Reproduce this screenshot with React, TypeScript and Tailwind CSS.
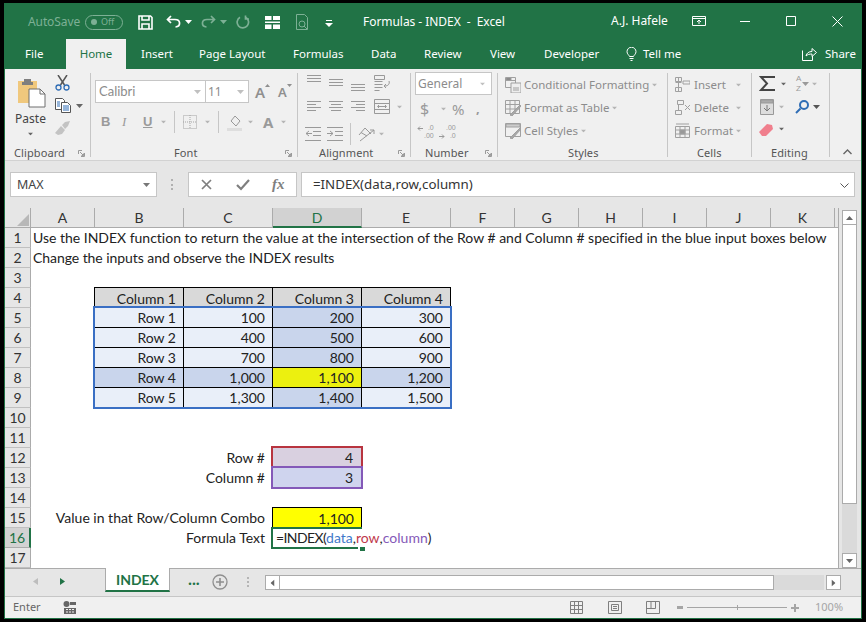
import React from "react";

const ui = { fontFamily: '"Noto Sans", sans-serif' };
const cal = { fontFamily: 'Lato, "Liberation Sans", sans-serif' };
const ar = { fontFamily: '"Liberation Sans", sans-serif' };

const Caret = ({ className = "" }: { className?: string }) => (
  <svg width="7" height="4" viewBox="0 0 7 4" className={className}><path d="M0 0h7L3.5 4z" fill="currentColor" /></svg>
);

const Launcher = () => (
  <svg width="7" height="7" viewBox="0 0 7 7" fill="none" stroke="#9a9a9a"><path d="M.5 4V.5H4M6.5 3v3.5H3M2 2l3.5 3.5M3.5 5.5h2v-2" /></svg>
);

function Sep({ h = "h-[22px]" }: { h?: string }) {
  return <div className={`w-px bg-[#c6c6c6] ${h}`} />;
}

function Group({ w, label, launcher, labelPad, children }: { w: string; label: string; launcher?: boolean; labelPad: string; children: React.ReactNode }) {
  return (
    <div className={`${w} relative flex flex-col border-r border-[#c6c6c6] mt-[4px] mb-[3px]`}>
      <div className="h-[74px] shrink-0">{children}</div>
      <div className={`flex items-center h-[12px] shrink-0 text-[11px] tracking-[0.1px] text-[#555] ${labelPad}`}>
        <span>{label}</span>
      </div>
      {launcher && <div className="absolute right-[5px] bottom-0 flex"><Launcher /></div>}
    </div>
  );
}

const colHeads = ["A", "B", "C", "D", "E", "F", "G", "H", "I", "J", "K"];

const rowStarts = ["row-start-2","row-start-3","row-start-4","row-start-5","row-start-6","row-start-7","row-start-8","row-start-9","row-start-10","row-start-11","row-start-12","row-start-13","row-start-14","row-start-15","row-start-16","row-start-17","row-start-18"];

const tableRows: { r: string; row: string; vals: string[]; hi?: boolean }[] = [
  { r: "Row 1", row: "row-start-6", vals: ["100", "200", "300"] },
  { r: "Row 2", row: "row-start-7", vals: ["400", "500", "600"] },
  { r: "Row 3", row: "row-start-8", vals: ["700", "800", "900"] },
  { r: "Row 4", row: "row-start-9", vals: ["1,000", "1,100", "1,200"], hi: true },
  { r: "Row 5", row: "row-start-10", vals: ["1,300", "1,400", "1,500"] },
];

const tCols = ["col-start-3", "col-start-4", "col-start-5", "col-start-6"];

function TCell({ cls, children }: { cls: string; children: React.ReactNode }) {
  return <div className={`${cls} flex items-center justify-end pr-[7px] text-[14px] text-[#222] border-b border-r border-black`}>{children}</div>;
}

function TitleBar() {
  return (
    <div className="h-[36px] flex items-center text-white text-[12px] pt-[2px]">
      <span className="ml-[23px] w-[57px] text-[12px] text-[#7db095] tracking-[-0.1px]">AutoSave</span>
      <div className="w-[38px] h-[15px] rounded-full border border-[#7db095] flex items-center pl-[5px] gap-[4px] text-[9px] text-[#7db095]">
        <span className="w-[6px] h-[6px] rounded-full bg-[#7db095]" /><span>Off</span>
      </div>
      <svg className="ml-[15px]" width="15" height="15" viewBox="0 0 15 15" fill="none" stroke="#fff" strokeWidth="1.6"><path d="M1 1h11.5L14 2.5V14H1z" /><path d="M4 1v4h7V1M4 14V9h7v5" /></svg>
      <svg className="ml-[13px]" width="15" height="14" viewBox="0 0 15 14" fill="none" stroke="#fff" strokeWidth="1.7"><path d="M5 1 1.5 4.5 5 8M2 4.5h7c6 0 6 7 .5 7.5" /></svg>
      <Caret className="ml-[4px] text-white" />
      <svg className="ml-[9px]" width="15" height="14" viewBox="0 0 15 14" fill="none" stroke="#7db095" strokeWidth="1.7"><path d="M10 1l3.5 3.5L10 8M13 4.5H6c-6 0-6 7-.5 7.5" /></svg>
      <Caret className="ml-[4px] text-[#7db095]" />
      <svg className="ml-[9px]" width="14" height="14" viewBox="0 0 14 14" fill="none" stroke="#7db095" strokeWidth="1.7"><path d="M9.5 2.2A5.7 5.7 0 1 1 4 2.3M9.5.5v3.5H13" /></svg>
      <svg className="ml-[15px]" width="15" height="13" viewBox="0 0 15 13" fill="#fff"><path d="M0 0h6.500v4H0zM8 0h7v4H8zM0 5.500h15v1.500H0zM0 8.500h6.500V13H0zM8 8.500h7V13H8z" /></svg>
      <svg className="ml-[15px]" width="15" height="16" viewBox="0 0 15 16" fill="none" stroke="#7db095"><path d="M1.500.500h8l3 3v12h-11z" /><circle cx="7" cy="10" r="3" /><path d="M9 12l3 3" /></svg>
      <svg className="ml-[15px] mt-[3px]" width="8" height="7" viewBox="0 0 8 7" fill="#fff"><path d="M1 0h6v1H1zM0 3h8L4 7z" /></svg>
      <span className="ml-[30px] w-[248px] tracking-[-0.05px] whitespace-nowrap">Formulas - INDEX&nbsp; -&nbsp; Excel</span>
      <span className="w-[56px] -mt-[2px] whitespace-nowrap">A.J. Hafele</span>
      <svg className="ml-[25px] -mt-[2px]" width="14" height="10" viewBox="0 0 14 10" fill="none" stroke="#fff"><path d="M.5.500h13v9H.5zM.5 2.500h13M7 8V4M5 6l2-2 2 2" /></svg>
      <svg className="ml-[34px] -mt-[2px]" width="10" height="1" viewBox="0 0 10 1"><path d="M0 0h10v1H0z" fill="#fff" /></svg>
      <svg className="ml-[36px] -mt-[2px]" width="10" height="10" viewBox="0 0 10 10" fill="none" stroke="#fff"><path d="M.5.500h9v9h-9z" /></svg>
      <svg className="ml-[36px] -mt-[2px]" width="11" height="11" viewBox="0 0 11 11" fill="none" stroke="#fff"><path d="M.5.500l10 10M10.500.500l-10 10" /></svg>
    </div>
  );
}

function Tabs() {
  const items: [string, string][] = [
    ["Insert", "ml-[15px] w-[58px]"],
    ["Page Layout", "w-[94px]"],
    ["Formulas", "w-[78px]"],
    ["Data", "w-[53px]"],
    ["Review", "w-[66px]"],
    ["View", "w-[54px]"],
    ["Developer", "w-[82px]"],
  ];
  return (
    <div className="h-[30px] flex items-stretch text-white text-[11.5px]">
      <span className="w-[61px] pl-[20px] flex items-center">File</span>
      <span className="w-[60px] bg-[#f0f0f0] text-[#217346] flex items-center justify-center">Home</span>
      {items.map(([t, c]) => <span key={t} className={`${c} flex items-center`}>{t}</span>)}
      <svg className="self-center" width="11" height="14" viewBox="0 0 10 14" fill="none" stroke="#fff"><path d="M3 9.500C2.500 8 .5 7 .5 4.700a4.500 4.500 0 0 1 9 0C9.500 7 7.500 8 7 9.500zM3 11.500h4M4 13.500h2" /></svg>
      <span className="ml-[6px] w-[159px] flex items-center">Tell me</span>
      <svg className="self-center" width="15" height="14" viewBox="0 0 15 14" fill="none" stroke="#fff"><path d="M.5 3.500v10h10V9M4 9c.5-3 3-4.500 6-4.500V1.500l4.500 4-4.500 4V7C7.500 7 5.500 7.500 4 9z" /></svg>
      <span className="ml-[8px] flex items-center">Share</span>
    </div>
  );
}

function StyleRow({ icon, label }: { icon: React.ReactNode; label: string }) {
  return (
    <div className="h-[23px] flex items-center text-[11.5px] text-[#8c8c8c]">
      <span className="w-[19px] flex">{icon}</span>
      <span>{label}</span>
      <Caret className="ml-[2px] text-[#b5b5b5] scale-75" />
    </div>
  );
}

const G = "#a0a0a0";

function Ribbon() {
  return (
    <div className="h-[92px] bg-[#f0f0f0] border-b border-[#d2d2d2] flex text-[#888]">
      <div className="w-[1px]" />
      <Group w="w-[85px]" label="Clipboard" launcher labelPad="pl-[8px]">
        <div className="flex pt-[2px]">
          <div className="w-[49px] flex flex-col items-center">
            <svg className="mt-[3px] ml-[2px]" width="30" height="30" viewBox="0 0 30 30">
              <path d="M1 3h19v22H1z" fill="#f0c87d" />
              <path d="M7 1h7v3h2v3H5V4h2z" fill="#7f7f7f" />
              <path d="M12 11h11l5 5v13H12z" fill="#fff" stroke="#6f6f6f" />
              <path d="M23 11v5h5" fill="none" stroke="#6f6f6f" />
            </svg>
            <span className="text-[12px] text-[#444] mt-[2px] leading-[18px]">Paste</span>
            <Caret className="mt-[4px] text-[#666] scale-75" />
          </div>
          <div className="flex flex-col gap-[7px]">
            <svg width="15" height="16" viewBox="0 0 15 16" fill="none"><path d="M3 0l6.500 10M12 0L5.500 10" stroke="#555" strokeWidth="1.500" /><circle cx="3.500" cy="12.500" r="2.500" stroke="#2f6db5" strokeWidth="1.300" /><circle cx="11.500" cy="12.500" r="2.500" stroke="#2f6db5" strokeWidth="1.300" /></svg>
            <div className="flex items-center">
              <svg width="16" height="15" viewBox="0 0 16 15" fill="#fff" stroke="#555"><path d="M.5.500h7l2 2v9h-9z" /><path d="M6.500 4.500h6l3 3v7h-9z" /><path d="M2 4h3M2 6h3M2 8h3" stroke="#2f6db5" /><path d="M8 8h6M8 10h6M8 12h6" stroke="#2f6db5" /></svg>
              <Caret className="ml-[5px] text-[#666]" />
            </div>
            <svg className="mt-[1px]" width="16" height="14" viewBox="0 0 16 14" fill="#c3c3c3"><path d="M0 12 6 5l4 4-3 4-4 1zM7 4l3-3 5-1-2 5-3 3z" /></svg>
          </div>
        </div>
      </Group>
      <Group w="w-[207px]" label="Font" labelPad="pl-[83px]" launcher>
        <div className="flex pt-[7px] pl-[4px] items-center">
          <div className="w-[111px] h-[23px] bg-white border border-[#c6c6c6] flex items-center pl-[3px] text-[#8c8c8c]" style={cal}>
            <span className="flex-1 text-[13px]">Calibri</span><Caret className="mr-[4px] text-[#c0c0c0]" />
          </div>
          <div className="w-[43px] h-[23px] bg-white border border-l-0 border-[#c6c6c6] flex items-center pl-[2px] text-[#8c8c8c]">
            <span className="flex-1 text-[12px]">11</span><Caret className="mr-[4px] text-[#c0c0c0]" />
          </div>
          <div className="ml-[6px] flex items-start text-[15px] font-semibold text-[#8f8f8f]"><span className="leading-[18px]">A</span><svg className="mt-[1px]" width="5" height="3" viewBox="0 0 5 3"><path d="M0 3 2.500 0 5 3z" fill="#8f8f8f" /></svg></div>
          <div className="ml-[8px] flex items-start text-[13px] font-semibold text-[#8f8f8f]"><span className="leading-[18px]">A</span><svg className="mt-[1px]" width="5" height="3" viewBox="0 0 5 3"><path d="M0 0 2.500 3 5 0z" fill="#8f8f8f" /></svg></div>
        </div>
        <div className="flex items-center h-[24px] mt-[7px] text-[#9a9a9a]">
          <span className="ml-[10px] w-[21px] text-[13px] font-bold" style={ar}>B</span>
          <span className="w-[21px] text-[13px] italic" style={{ fontFamily: '"Liberation Serif"' }}>I</span>
          <span className="w-[17px] text-[13px] font-bold underline" style={ar}>U</span>
          <Caret className="text-[#b5b5b5] scale-75" />
          <div className="ml-[7px] mr-[8px]"><Sep /></div>
          <svg width="14" height="14" viewBox="0 0 14 14" fill="none" stroke="#a5a5a5" strokeDasharray="1 1"><path d="M.5.500h13v13H.5zM7 0v14M0 7h14" /></svg>
          <Caret className="ml-[7px] text-[#b5b5b5] scale-75" />
          <div className="ml-[7px] mr-[7px]"><Sep /></div>
          <svg width="17" height="17" viewBox="0 0 17 17" fill="none"><path d="M5 7l4-5 5 5-4 5z" stroke="#999" /><path d="M1 14h15v3H1z" fill="#dedede" /></svg>
          <Caret className="ml-[4px] text-[#b5b5b5] scale-75" />
          <span className="ml-[9px] w-[15px] text-[15px] font-bold">A</span>
          <Caret className="ml-[2px] text-[#b5b5b5] scale-75" />
        </div>
      </Group>
      <Group w="w-[113px]" label="Alignment" launcher labelPad="pl-[21px]">
        <div className="flex pl-[8px] pt-[2px] gap-[6px]">
          <svg width="16" height="16" viewBox="0 0 16 16" stroke="#999"><path d="M1 .5h14M1 3.500h14M1 6.500h14" /></svg>
          <svg width="16" height="16" viewBox="0 0 16 16" stroke="#999"><path d="M1 4.500h14M1 7.500h14M1 10.500h14" /></svg>
          <svg width="16" height="16" viewBox="0 0 16 16" stroke="#999"><path d="M1 9.500h14M1 12.500h14M1 15.500h14" /></svg>
          <svg className="ml-[2px]" width="17" height="16" viewBox="0 0 17 16" fill="none" stroke="#999"><path d="M.5.500h10v4H.5zM.5 6.500h8M.5 9.500h8M.5 12.500h8M.5 15.500h5M15 6c1 3-1 5-4 5M12 9l-2 2 2 2" /></svg>
        </div>
        <div className="flex pl-[8px] pt-[8px] gap-[6px] items-center">
          <svg width="16" height="11" viewBox="0 0 16 11" stroke="#999"><path d="M1 .5h14M1 3.500h9M1 6.500h14M1 9.500h9" /></svg>
          <svg width="16" height="11" viewBox="0 0 16 11" stroke="#999"><path d="M1 .5h14M3 3.500h10M1 6.500h14M3 9.500h10" /></svg>
          <svg width="16" height="11" viewBox="0 0 16 11" stroke="#999"><path d="M1 .5h14M6 3.500h9M1 6.500h14M6 9.500h9" /></svg>
          <svg className="ml-[2px]" width="16" height="15" viewBox="0 0 16 15" fill="none" stroke="#999"><path d="M.5.500h15v14H.5zM.5 4.500h15M.5 10.500h15M4 7.500h8M5 6 3.500 7.500 5 9M11 6l1.500 1.500L11 9" /></svg>
          <Caret className="text-[#b5b5b5] scale-75" />
        </div>
        <div className="flex pl-[7px] pt-[9px] items-center">
          <svg width="16" height="14" viewBox="0 0 16 14" fill="none" stroke="#999"><path d="M0 .5h16M8 4.500h8M8 8.500h8M0 13.500h16M7 6.500H1M4 4 1 6.500 4 9" /></svg>
          <svg className="ml-[6px]" width="16" height="14" viewBox="0 0 16 14" fill="none" stroke="#999"><path d="M0 .5h16M8 4.500h8M8 8.500h8M0 13.500h16M0 6.500h6M3 4l3 2.500L3 9" /></svg>
          <div className="ml-[7px] mr-[7px]"><Sep /></div>
          <svg width="18" height="16" viewBox="0 0 18 16" fill="none" stroke="#999"><path d="M1 9l6-7 6 6M3 6.500l6 3.500M2 15 16 4M12 4h4v4" /></svg>
          <Caret className="ml-[2px] text-[#b5b5b5] scale-75" />
        </div>
      </Group>
      <Group w="w-[87px]" label="Number" launcher labelPad="pl-[14px]">
        <div className="pl-[4px] -mt-[1px]">
          <div className="w-[77px] h-[23px] bg-white border border-[#c6c6c6] flex items-center pl-[2px] text-[12px] text-[#8c8c8c]">
            <span className="flex-1">General</span><Caret className="mr-[5px] text-[#c0c0c0] scale-75" />
          </div>
          <div className="flex items-center h-[24px] mt-[2px] text-[#9a9a9a] text-[15px]">
            <span className="ml-[5px] w-[17px] text-[16px]">$</span>
            <Caret className="ml-[3px] text-[#b5b5b5] scale-75" />
            <span className="ml-[5px] w-[24px]">%</span>
            <span className="font-bold text-[13px]">,</span>
          </div>
          <div className="flex items-center h-[24px] -mt-[1px] text-[#999] text-[7px] leading-[8.5px]" style={ar}>
            <div className="ml-[2px] w-[22px] flex items-start">
              <svg className="mt-[2px] mr-[1px]" width="6" height="5" viewBox="0 0 6 5" fill="none" stroke="#999"><path d="M6 2.500H1M3 .5l-2 2 2 2" /></svg>
              <div className="text-right">.0<br />.00</div>
            </div>
            <div className="w-[20px] flex items-end">
              <svg className="mb-[2px] mr-[1px]" width="6" height="5" viewBox="0 0 6 5" fill="none" stroke="#999"><path d="M0 2.500h5M3 .5l2 2-2 2" /></svg>
              <div className="text-right">.00<br />.0</div>
            </div>
          </div>
        </div>
      </Group>
      <Group w="w-[170px]" label="Styles" labelPad="pl-[70px]">
        <div className="pl-[7px]">
          <StyleRow label="Conditional Formatting" icon={<svg width="16" height="16" viewBox="0 0 16 16" fill="none" stroke={G}><path d="M.5.500h10v10H.5z" /><path d="M6 6h10v10H6z" fill="#eee" /><path d="M.5 3.500h10M8 11h6M8 13h6" /><path d="M1 1h5v2H1z" fill="#777" /></svg>} />
          <StyleRow label="Format as Table" icon={<svg width="16" height="16" viewBox="0 0 16 16" fill="none" stroke={G}><path d="M.5.500h14v13H.5zM.5 4.500h14M.5 9h14M5 .5v13M10 .5v13" /><path d="M5 15 15 5l1 1L7 16z" fill="#a8a8a8" /></svg>} />
          <StyleRow label="Cell Styles" icon={<svg width="16" height="16" viewBox="0 0 16 16" fill="none" stroke={G}><path d="M.5.500h15v13H.5z" /><path d="M1 1h14v3H1z" fill="#ccc" /><path d="M5 15 15 5l1 1L7 16z" fill="#a8a8a8" /></svg>} />
        </div>
      </Group>
      <Group w="w-[84px]" label="Cells" labelPad="pl-[29px]">
        <div className="pl-[7px]">
          <div className="flex items-center h-[23px] text-[11.5px] text-[#8c8c8c]"><svg className="mr-[4px]" width="15" height="15" viewBox="0 0 15 15" fill="none" stroke={G}><path d="M.5.500h6v4h-6zM.5 10.500h6v4h-6zM.5 5.500h6M3.500 0v15M8 4h7v3H8z" /></svg><span className="w-[41px]">Insert</span><Caret className="text-[#b5b5b5] scale-75" /></div>
          <div className="flex items-center h-[23px] text-[11.5px] text-[#8c8c8c]"><svg className="mr-[4px]" width="15" height="15" viewBox="0 0 15 15" fill="none" stroke={G}><path d="M2.500.500h6v4h-6zM.5 10.500h6v4h-6zM3.500 5v5M10 5l5 5M15 5l-5 5" /></svg><span className="w-[41px]">Delete</span><Caret className="text-[#b5b5b5] scale-75" /></div>
          <div className="flex items-center h-[23px] text-[11.5px] text-[#8c8c8c]"><svg className="mr-[4px]" width="15" height="15" viewBox="0 0 15 15" fill="none" stroke={G}><path d="M.5 3.500h14v11H.5zM5 3.500v11M10 3.500v11M.5 7h14M.5 11h14M1 1h13" /><path d="M5 7h5v4H5z" fill="#999" /></svg><span className="w-[41px]">Format</span><Caret className="text-[#b5b5b5] scale-75" /></div>
        </div>
      </Group>
      <Group w="w-[78px]" label="Editing" labelPad="pl-[19px]">
        <div className="pl-[7px] pt-[1px]">
          <div className="flex items-center h-[19px]">
            <svg width="16" height="15" viewBox="0 0 16 15" fill="none" stroke="#444" strokeWidth="2"><path d="M15 2V1H2l6 6.500L2 14h13v-1" /></svg>
            <Caret className="ml-[5px] text-[#666] scale-75" />
            <span className="ml-[9px] text-[8px] leading-[9.5px] text-[#9a9a9a]" style={ar}>A<br />Z</span>
            <Caret className="ml-[1px] text-[#9a9a9a]" />
            <Caret className="ml-[2px] text-[#b5b5b5] scale-75" />
          </div>
          <div className="flex items-center h-[24px] mt-[2px]">
            <svg className="ml-[1px]" width="14" height="16" viewBox="0 0 14 16" fill="#ddd" stroke="#999"><path d="M.5.500h13v15H.5z" /><path d="M1 1h12v3H1z" fill="#aaa" /><path d="M7 6v6M4 9l3 3 3-3" fill="none" stroke="#777" /></svg>
            <Caret className="ml-[4px] text-[#b5b5b5] scale-75" />
            <svg className="ml-[10px]" width="14" height="14" viewBox="0 0 14 14" fill="none" stroke="#2f6db5" strokeWidth="2"><circle cx="9" cy="5" r="4" /><path d="M5.500 8.500l-4.500 4.500" /></svg>
            <Caret className="ml-[4px] text-[#555]" />
          </div>
          <div className="flex items-center h-[20px]">
            <svg width="14" height="13" viewBox="0 0 14 13"><path d="M0 9 8 1l5 1 1 4-7 7H3z" fill="#f07f8d" /></svg>
            <Caret className="ml-[5px] text-[#666] scale-75" />
          </div>
        </div>
      </Group>
      <div className="flex-1 flex items-end justify-end pr-[9px] pb-[5px]">
        <svg width="9" height="6" viewBox="0 0 9 6" fill="none" stroke="#666" strokeWidth="1.400"><path d="M.5 5 4.500 1l4 4" /></svg>
      </div>
    </div>
  );
}

function FormulaBar() {
  return (
    <div className="h-[47px] bg-[#e6e6e6] flex pt-[11px] pl-[5px] pr-[6px]">
      <div className="w-[147px] h-[25px] bg-white border border-[#c6c6c6] flex items-center pl-[6px] pt-[1px] text-[12.5px] text-[#444]">
        <span className="flex-1">MAX</span><Caret className="mr-[6px] text-[#777]" />
      </div>
      <div className="w-[31px] h-[25px] flex items-center justify-center"><span className="w-[3px] h-[11px] border-l-2 border-dotted border-[#b0b0b0]" /></div>
      <div className="w-[109px] h-[25px] bg-white border border-[#c6c6c6] flex items-center text-[#7f7f7f]">
        <svg className="ml-[12px]" width="11" height="11" viewBox="0 0 11 11" fill="none" stroke="#7f7f7f" strokeWidth="1.700"><path d="M1 1l9 9M10 1l-9 9" /></svg>
        <svg className="ml-[24px]" width="14" height="12" viewBox="0 0 14 12" fill="none" stroke="#7f7f7f" strokeWidth="2.200"><path d="M1 6l4 4 8-9" /></svg>
        <span className="ml-[22px] text-[15px] italic font-bold" style={{ fontFamily: '"Liberation Serif"' }}>fx</span>
      </div>
      <div className="ml-[4px] flex-1 h-[25px] bg-white border border-[#c6c6c6] flex items-center pl-[11px] pt-[1px] text-[13.3px] text-[#333] pr-[5px]">
        <span className="flex-1">=INDEX(data,row,column)</span>
        <svg width="9" height="5" viewBox="0 0 9 5" fill="none" stroke="#555"><path d="M.5.500l4 4 4-4" /></svg>
      </div>
    </div>
  );
}

function Sheet() {
  const label = "flex items-center justify-end pr-[8px] pb-[1px] text-[14px] text-[#222]";
  return (
    <div className="flex-1 min-w-0 relative grid grid-cols-[26px_64px_89px_89px_89px_89px_64px_64px_64px_64px_64px_64px_1fr] grid-rows-[20px_repeat(17,20px)] bg-white border-r border-[#ababab] overflow-hidden" style={cal}>
      <div className="row-start-1 col-start-1 bg-[#e6e6e6] border-r border-b border-[#ababab] relative overflow-hidden">
        <svg className="absolute right-[1px] bottom-[1px]" width="12" height="12" viewBox="0 0 12 12"><path d="M12 0v12H0z" fill="#b8b8b8" /></svg>
      </div>
      {colHeads.map((c, i) => (
        <div key={c} style={{ gridColumnStart: i + 2, gridRowStart: 1 }} className={`flex items-center justify-center text-[14px] border-b border-r ${c === "D" ? "bg-[#d2d2d2] text-[#217346] border-b-2 border-b-[#217346] border-r-[#ababab]" : "bg-[#e6e6e6] text-[#333] border-[#ababab]"}`}>{c}</div>
      ))}
      <div className="row-start-1 col-start-13 bg-[#e6e6e6] border-b border-[#ababab]" />
      {rowStarts.map((rs, i) => (
        <div key={rs} className={`${rs} col-start-1 flex items-center justify-center text-[14px] border-b border-r ${i === 15 ? "bg-[#d2d2d2] text-[#217346] border-[#ababab] border-r-2 border-r-[#217346]" : "bg-[#e6e6e6] text-[#333] border-[#c0c0c0] border-r-[#ababab]"}`}>{i + 1}</div>
      ))}
      <div className="row-start-2 col-start-2 col-span-12 flex items-center pl-[2px] pb-[1px] text-[14px] text-[#222] whitespace-nowrap tracking-[-0.01px]">Use the INDEX function to return the value at the intersection of the Row # and Column # specified in the blue input boxes below</div>
      <div className="row-start-3 col-start-2 col-span-11 flex items-center pl-[2px] pb-[1px] text-[14px] text-[#222] whitespace-nowrap tracking-[-0.06px]">Change the inputs and observe the INDEX results</div>

      {["Column 1", "Column 2", "Column 3", "Column 4"].map((c, i) => (
        <div key={c} className={`row-start-5 ${tCols[i]} flex items-center justify-end pr-[7px] text-[14px] text-[#222] bg-[#d9d9d9] border-t border-r border-black -mt-[1px] ${i === 0 ? "border-l -ml-[1px]" : ""}`}>{c}</div>
      ))}
      {tableRows.map((t) => (
        <React.Fragment key={t.r}>
          <TCell cls={`${t.row} col-start-3 ${t.hi ? "bg-[#c9d5ec]" : "bg-[#e9eff9]"}`}>{t.r}</TCell>
          <TCell cls={`${t.row} col-start-4 ${t.hi ? "bg-[#c9d5ec]" : "bg-[#e9eff9]"}`}>{t.vals[0]}</TCell>
          <TCell cls={`${t.row} col-start-5 ${t.hi ? "bg-[#ecf00f]" : "bg-[#c9d5ec]"}`}>{t.vals[1]}</TCell>
          <TCell cls={`${t.row} col-start-6 ${t.hi ? "bg-[#c9d5ec]" : "bg-[#e9eff9]"}`}>{t.vals[2]}</TCell>
        </React.Fragment>
      ))}
      <div className="row-start-6 row-span-5 col-start-3 col-span-4 border-2 border-[#3a6fc4] -ml-[2px] -mr-[1px] -mt-[2px] -mb-[1px] z-10 pointer-events-none" />

      <div className={`row-start-13 col-start-3 col-span-2 ${label}`}>Row #</div>
      <div className={`row-start-14 col-start-3 col-span-2 ${label}`}>Column #</div>
      <div className={`row-start-16 col-start-2 col-span-3 ${label}`}>Value in that Row/Column Combo</div>
      <div className={`row-start-17 col-start-2 col-span-3 ${label}`}>Formula Text</div>
      <div className="row-start-13 col-start-5 bg-[#d9d0e0] border-2 border-[#b8343f] -ml-[2px] -mr-[1px] -mt-[2px] flex items-center justify-end pr-[8px] text-[14px] text-[#222]">4</div>
      <div className="row-start-14 col-start-5 bg-[#cfd4ee] border-2 border-[#8459b8] -ml-[2px] -mr-[1px] -mt-[2px] -mb-[1px] flex items-center justify-end pr-[8px] text-[14px] text-[#222] z-10">3</div>
      <div className="row-start-16 col-start-5 bg-[#ffff00] border-t border-x border-black -ml-[1px] -mt-[1px] flex items-center justify-end pr-[7px] text-[14px] text-[#222]">1,100</div>
      <div className="row-start-17 col-start-5 col-span-3 flex items-center pl-[3px] pb-[1px] text-[14px] text-[#222] whitespace-nowrap">
        <span className="tracking-[-0.6px]">=INDEX(</span><span className="text-[#3f78c9]">data</span><span>,</span><span className="text-[#c0394b]">row</span><span>,</span><span className="text-[#8459b8]">column</span><span>)</span>
      </div>
      <div className="row-start-17 col-start-5 border-l-2 border-t-2 border-[#217346] -ml-[2px] -mt-[1px] -mb-[1px] z-10 relative">
        <span className="absolute left-0 right-[4px] bottom-0 h-[2px] bg-[#217346]" />
        <span className="absolute -right-[3px] -bottom-[2px] w-[5px] h-[4px] bg-[#217346]" />
      </div>
    </div>
  );
}

function VScroll() {
  return (
    <div className="w-[22px] bg-[#e6e6e6] pl-[3px] pr-[4px] pt-[2px]">
      <div className="h-full w-[15px] bg-[#dadada] flex flex-col justify-between">
        <div>
          <div className="h-[15px] bg-white border border-[#ababab] flex items-center justify-center"><Caret className="rotate-180 text-[#666]" /></div>
          <div className="h-[279px] bg-white border-x border-b border-[#ababab]" />
        </div>
        <div className="h-[15px] bg-white border border-[#ababab] flex items-center justify-center"><Caret className="text-[#666]" /></div>
      </div>
    </div>
  );
}

function SheetTabs() {
  return (
    <div className="h-[28px] bg-[#e6e6e6] border-t border-[#ababab] flex items-start">
      <svg className="ml-[28px] mt-[9px]" width="5" height="7" viewBox="0 0 5 7"><path d="M5 0v7L0 3.500z" fill="#bdbdbd" /></svg>
      <svg className="ml-[22px] mt-[9px]" width="5" height="7" viewBox="0 0 5 7"><path d="M0 0v7l5-3.500z" fill="#217346" /></svg>
      <div className="ml-[40px] w-[65px] h-[24px] -mt-[1px] bg-white border-x border-[#ababab] border-b-2 border-b-[#217346] flex items-center justify-center text-[14px] font-bold text-[#217346]" style={cal}>INDEX</div>
      <span className="ml-[18px] mt-[4px] w-[10px] text-[14px] font-bold leading-[14px] text-[#217346]">...</span>
      <svg className="ml-[14px] mt-[5px]" width="16" height="16" viewBox="0 0 16 16" fill="none" stroke="#8f8f8f" strokeWidth="1.300"><circle cx="8" cy="8" r="7" /><path d="M8 4v8M4 8h8" strokeWidth="1.600" /></svg>
      <span className="ml-[19px] mt-[8px] w-[3px] h-[10px] border-l-2 border-dotted border-[#b5b5b5]" />
      <div className="ml-[15px] mt-[6px] w-[576px] h-[15px] flex">
        <div className="w-[15px] bg-white border border-[#ababab] flex items-center justify-center"><Caret className="rotate-90 text-[#666]" /></div>
        <div className="w-[494px] bg-white border-y border-r border-[#ababab]" />
        <div className="flex-1 bg-[#dadada]" />
        <div className="ml-[2px] w-[15px] bg-white border border-[#ababab] flex items-center justify-center"><Caret className="-rotate-90 text-[#666]" /></div>
      </div>
    </div>
  );
}

function StatusBar() {
  const s = "#7f7f7f";
  return (
    <div className="h-[22px] bg-[#f0f0f0] border-t border-[#c6c6c6] flex items-center text-[11px] text-[#666]">
      <span className="ml-[8px] w-[50px]">Enter</span>
      <svg width="14" height="13" viewBox="0 0 14 13" fill="#666"><circle cx="3.500" cy="3" r="3" /><path d="M7 1h6v3H7zM1 7h12v6H1z" /><path d="M3 8.500h2M6 8.500h2M9 8.500h2M3 11h2M6 11h2M9 11h2" stroke="#f0f0f0" /></svg>
      <svg className="ml-[493px]" width="13" height="13" viewBox="0 0 13 13" fill="none" stroke={s}><path d="M.5.500h12v12H.5zM4.500.500v12M8.500.500v12M.5 4.500h12M.5 8.500h12" /></svg>
      <svg className="ml-[25px]" width="14" height="13" viewBox="0 0 14 13" fill="none" stroke={s}><path d="M.5.500h13v12H.5zM3.500 3.500h7v6h-7zM5 5.500h4M5 7.500h4" /></svg>
      <svg className="ml-[24px]" width="14" height="13" viewBox="0 0 14 13" fill="none" stroke={s}><path d="M.5 12.500V.500h13v12zM.5 7.500h9V.500M5 .500v7" /></svg>
      <svg className="ml-[17px]" width="6" height="3" viewBox="0 0 6 3"><path d="M0 0h6v3H0z" fill="#a5a5a5" /></svg>
      <div className="ml-[4px] w-[100px] h-[1px] bg-[#a5a5a5] relative"><span className="absolute left-[50px] -top-[2px] w-px h-[5px] bg-[#a5a5a5]" /></div>
      <svg className="ml-[4px]" width="8" height="8" viewBox="0 0 8 8"><path d="M3 0h2v3h3v2H5v3H3V5H0V3h3z" fill="#a5a5a5" /></svg>
      <span className="ml-[16px] text-[#a5a5a5] text-[11px]">100%</span>
    </div>
  );
}

export default function App() {
  return (
    <div className="w-[866px] h-[622px] bg-black pt-[3px] pl-[4px] pr-[4px] pb-[3px]" style={ui}>
      <div className="h-full flex flex-col bg-[#217346] pl-[1px] pr-[1px] pb-[1px]">
        <TitleBar />
        <Tabs />
        <Ribbon />
        <FormulaBar />
        <div className="flex h-[360px]">
          <Sheet />
          <VScroll />
        </div>
        <SheetTabs />
        <StatusBar />
      </div>
    </div>
  );
}
